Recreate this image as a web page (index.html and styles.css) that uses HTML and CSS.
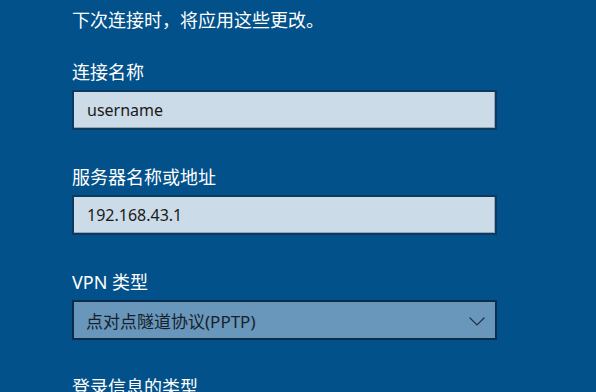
FILE: index.html
```html
<!DOCTYPE html>
<html lang="zh-CN">
<head>
    <meta charset="UTF-8">
    <meta name="viewport" content="width=device-width, initial-scale=1.0">
    <title>编辑 VPN 连接</title>
    <link rel="stylesheet" href="styles.css">
</head>
<body>
    <div class="page">
        <p class="note">下次连接时，将应用这些更改。</p>

        <div class="field">
            <label class="field-label" for="connName">连接名称</label>
            <input id="connName" class="text-box" type="text" value="username">
        </div>

        <div class="field">
            <label class="field-label" for="server">服务器名称或地址</label>
            <input id="server" class="text-box" type="text" value="192.168.43.1">
        </div>

        <div class="field">
            <div class="field-label">VPN 类型</div>
            <div class="combo">
                <span>点对点隧道协议(PPTP)</span>
                <svg class="chevron" width="16" height="9" viewBox="0 0 16 9">
                    <polyline points="0.5,0.5 8,8 15.5,0.5" fill="none" stroke="#1e3247" stroke-width="1.2"/>
                </svg>
            </div>
        </div>

        <div class="field">
            <div class="field-label">登录信息的类型</div>
        </div>
    </div>
</body>
</html>
```

FILE: styles.css
```css
html, body {
    margin: 0;
    height: 100%;
    overflow: hidden;
}

body {
    font-family: 'Noto Sans', 'Noto Sans CJK SC', sans-serif;
    background-color: #02518a;
    color: #fff;
}

.page {
    padding: 8px 0 0 72px;
    width: 425px;
}

.note {
    margin: 0 0 28px;
    font-size: 18px;
    line-height: 24px;
}

.field {
    margin-bottom: 35px;
}

.field-label {
    display: block;
    font-size: 18px;
    line-height: 24px;
    margin-bottom: 6px;
}

.text-box {
    display: block;
    box-sizing: border-box;
    width: 425px;
    height: 40px;
    margin: 0;
    padding: 0 13px;
    border: 2px solid #0c3a60;
    background: #cbdbe8;
    box-shadow: inset -1px -1px 0 #98a6b2;
    color: #1a1a1a;
    font-family: 'Noto Sans', 'Noto Sans CJK SC', sans-serif;
    font-size: 16px;
    outline: none;
}

.combo {
    box-sizing: border-box;
    width: 425px;
    height: 40px;
    padding: 0 10px 0 12px;
    border: 2px solid #0b2c4b;
    background: #6897bb;
    color: #17212b;
    font-size: 17px;
    display: flex;
    align-items: center;
    justify-content: space-between;
}

.chevron {
    margin-top: 3px;
}
```
